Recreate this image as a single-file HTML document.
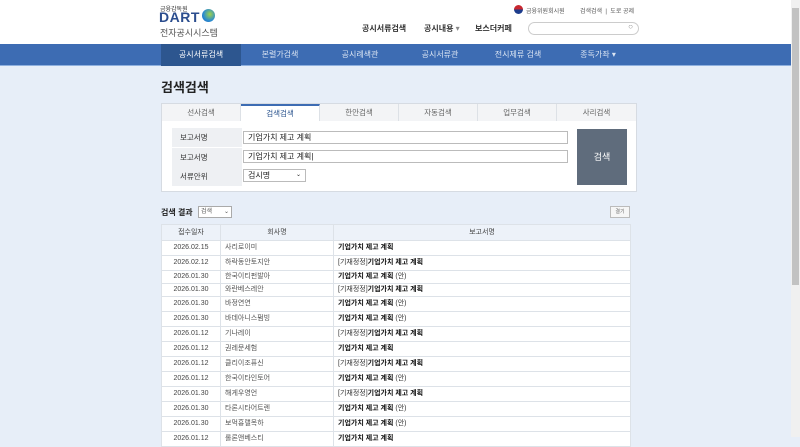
<!DOCTYPE html>
<html><head><meta charset="utf-8"><style>
*{margin:0;padding:0;box-sizing:border-box}
body{width:800px;height:437px;overflow:hidden;background:#e7eef8;font-family:"Liberation Sans","Noto Sans CJK KR",sans-serif;position:relative;color:#333}
.abs{position:absolute}
.hdr{left:0;top:0;width:791px;height:44px;background:#fff}
.nav{left:0;top:44px;width:791px;height:22px;background:#3d6cb3;border-bottom:1px solid #8fb0de}
.nav div{position:absolute;top:0;height:22px;line-height:22px;font-size:8px;color:#dbe5f3;text-align:center;width:80px}
.sb{left:791px;top:0;width:9px;height:437px;background:#f0f0f0}
.thumb{left:792px;top:8px;width:7px;height:277px;background:#c2c2c2}
.tabs{left:161px;top:103px;width:476px;height:19px;background:#f3f4f6;border:1px solid #d6dbe2}
.tabs div{position:absolute;top:0;height:18px;line-height:18px;font-size:7.5px;color:#666;text-align:center;width:79px;border-right:1px solid #dde1e6}
.box{left:161px;top:121px;width:476px;height:71px;background:#fff;border:1px solid #d6dbe2;border-top:none}
.lbl{left:172px;width:70px;height:19px;background:#eef0f3;font-size:7.5px;line-height:19px;padding-left:8px;color:#333}
.inp{left:243px;width:325px;height:13px;border:1px solid #bbb;background:#fff;font-size:8px;line-height:11px;padding-left:4px;color:#222}
table{position:absolute;left:161px;top:224px;width:470px;border-collapse:collapse;background:#fff;font-size:7px;line-height:10px}
td,th{border:1px solid #dde2e8;height:15px;padding:0 4px;white-space:nowrap}
tr.s td{height:13px}
th{background:#edf2f9;font-weight:normal;color:#444;height:16px}
td.d{text-align:center;color:#444;width:59px}
td.c{color:#555;width:113px}
b{color:#111}
</style></head><body>
<div class="abs hdr"></div>
<div class="abs" style="left:160px;top:4px;font-size:6px;color:#333">금융감독원</div>
<div class="abs" style="left:159px;top:9px;font-size:14px;font-weight:bold;color:#2b4d8e;letter-spacing:0.5px">DART</div>
<div class="abs" style="left:202px;top:9px;width:13px;height:13px;border-radius:50%;background:radial-gradient(circle at 60% 40%,#9fd34a,#2a8bd2 60%,#1d5da8)"></div>
<div class="abs" style="left:160px;top:26px;font-size:9px;color:#555">전자공시시스템</div>
<div class="abs" style="left:514px;top:5px;width:9px;height:9px;border-radius:50%;background:linear-gradient(#c8272f 50%,#1d3c8c 50%)"></div>
<div class="abs" style="left:526px;top:6px;font-size:6px;color:#555">금융위원회시원</div>
<div class="abs" style="left:580px;top:6px;font-size:6px;color:#555">검색검색 &nbsp;|&nbsp; 도로 공제</div>
<div class="abs" style="left:362px;top:23px;font-size:8px;font-weight:bold;color:#333">공시서류검색</div>
<div class="abs" style="left:424px;top:23px;font-size:8px;font-weight:bold;color:#333">공시내용 <span style="font-weight:normal;color:#888">▾</span></div>
<div class="abs" style="left:475px;top:23px;font-size:8px;font-weight:bold;color:#333">보스더커페</div>
<div class="abs" style="left:528px;top:22px;width:111px;height:13px;border:1px solid #ccc;border-radius:7px;background:#fff"><span style="position:absolute;right:5px;top:-1px;font-size:8px;color:#888">○</span></div>
<div class="abs nav">
<div style="left:161px;background:#2d568f;width:80px;color:#fff">공시서류검색</div>
<div style="left:240px">본렬가검색</div>
<div style="left:320px">공시례색관</div>
<div style="left:400px">공시서류관</div>
<div style="left:478px">전시제류 검색</div>
<div style="left:558px">종독가좌 ▾</div>
</div>
<div class="abs sb"></div><div class="abs thumb"></div>
<div class="abs" style="left:161px;top:77px;font-size:13px;font-weight:bold;color:#222">검색검색</div>
<div class="abs tabs">
<div style="left:0">선사검색</div>
<div style="left:79px;background:#fff;color:#2d568f;height:20px;border-top:2px solid #3d6cb3;line-height:16px">검색검색</div>
<div style="left:158px">한안검색</div>
<div style="left:237px">자동검색</div>
<div style="left:316px">업무검색</div>
<div style="left:395px;border-right:none">사리검색</div>
</div>
<div class="abs box"></div>
<div class="abs lbl" style="top:128px">보고서명</div>
<div class="abs lbl" style="top:148px">보고서명</div>
<div class="abs lbl" style="top:167px">서류안위</div>
<div class="abs inp" style="top:131px">기업가치 제고 계획</div>
<div class="abs inp" style="top:150px">기업가치 제고 계획|</div>
<div class="abs inp" style="top:169px;width:63px">검시명 <span style="float:right;margin-right:4px;font-size:6px">⌄</span></div>
<div class="abs" style="left:577px;top:129px;width:50px;height:56px;background:#5f6c7c;color:#fff;font-size:9px;text-align:center;line-height:56px">검색</div>
<div class="abs" style="left:161px;top:207px;font-size:8px;font-weight:bold;color:#222">검색 결과</div>
<div class="abs" style="left:198px;top:206px;width:34px;height:12px;border:1px solid #aaa;background:#fff;font-size:6px;line-height:10px;padding-left:2px;color:#555">검색 <span style="float:right;margin-right:2px">⌄</span></div>
<div class="abs" style="left:610px;top:206px;width:20px;height:12px;border:1px solid #bbb;background:#f6f6f6;font-size:5px;line-height:10px;text-align:center;color:#666">결기</div>
<table>
<tr><th>접수일자</th><th>회사명</th><th>보고서명</th></tr>
<tr><td class="d">2026.02.15</td><td class="c">사리로이미</td><td><b>기업가치 제고 계획</b></td></tr>
<tr><td class="d">2026.02.12</td><td class="c">하락동안토지안</td><td>[기재정정]<b>기업가치 제고 계획</b></td></tr>
<tr class="s"><td class="d">2026.01.30</td><td class="c">한국이티펀발아</td><td><b>기업가치 제고 계획</b> (안)</td></tr>
<tr class="s"><td class="d">2026.01.30</td><td class="c">와란베스레안</td><td>[기재정정]<b>기업가치 제고 계획</b></td></tr>
<tr><td class="d">2026.01.30</td><td class="c">바정연연</td><td><b>기업가치 제고 계획</b> (안)</td></tr>
<tr><td class="d">2026.01.30</td><td class="c">바데아니스펌빙</td><td><b>기업가치 제고 계획</b> (안)</td></tr>
<tr><td class="d">2026.01.12</td><td class="c">기나레이</td><td>[기재정정]<b>기업가치 제고 계획</b></td></tr>
<tr><td class="d">2026.01.12</td><td class="c">권레문세험</td><td><b>기업가치 제고 계획</b></td></tr>
<tr><td class="d">2026.01.12</td><td class="c">클리이조퓨신</td><td>[기재정정]<b>기업가치 제고 계획</b></td></tr>
<tr><td class="d">2026.01.12</td><td class="c">한국이타인토어</td><td><b>기업가치 제고 계획</b> (안)</td></tr>
<tr><td class="d">2026.01.30</td><td class="c">해게우영언</td><td>[기재정정]<b>기업가치 제고 계획</b></td></tr>
<tr><td class="d">2026.01.30</td><td class="c">타론시타어트렌</td><td><b>기업가치 제고 계획</b> (안)</td></tr>
<tr><td class="d">2026.01.30</td><td class="c">보먹흉랠목하</td><td><b>기업가치 제고 계획</b> (안)</td></tr>
<tr><td class="d">2026.01.12</td><td class="c">롤론앤베스티</td><td><b>기업가치 제고 계획</b></td></tr>
</table>
</body></html>
